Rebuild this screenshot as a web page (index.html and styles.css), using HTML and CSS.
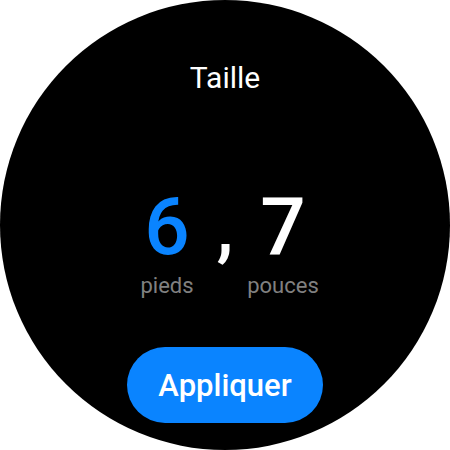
FILE: index.html
```html
<!DOCTYPE html>
<html lang="fr">
<head>
    <meta charset="UTF-8">
    <meta name="viewport" content="width=device-width, initial-scale=1.0">
    <title>Taille</title>
    <link rel="stylesheet" href="styles.css">
</head>
<body>
    <div class="watch">
        <h1 class="title">Taille</h1>

        <div class="picker">
            <div class="col">
                <span class="num active">6</span>
                <span class="unit">pieds</span>
            </div>
            <div class="sep">,</div>
            <div class="col">
                <span class="num">7</span>
                <span class="unit">pouces</span>
            </div>
        </div>

        <button class="apply">Appliquer</button>
    </div>
</body>
</html>
```

FILE: styles.css
```css
body {
    margin: 0;
    padding: 0;
    background-color: #fff;
    font-family: 'Roboto', 'Liberation Sans', sans-serif;
}

.watch {
    width: 450px;
    height: 450px;
    border-radius: 50%;
    background-color: #000;
    display: flex;
    flex-direction: column;
    align-items: center;
    box-sizing: border-box;
    padding-top: 58px;
}

.title {
    margin: 0;
    font-size: 30px;
    font-weight: 400;
    line-height: 40px;
    color: #fff;
}

.picker {
    display: flex;
    align-items: flex-start;
    margin-top: 89px;
}

.col {
    width: 80px;
    display: flex;
    flex-direction: column;
    align-items: center;
}

.num {
    font-size: 80px;
    font-weight: 500;
    line-height: 80px;
    color: #fff;
}

.num.active {
    color: #0a84ff;
}

.sep {
    width: 36px;
    text-align: center;
    font-size: 76px;
    font-weight: 500;
    line-height: 80px;
    color: #fff;
}

.unit {
    margin-top: 8px;
    font-size: 22px;
    line-height: 22px;
    color: #808080;
}

.apply {
    margin-top: 50px;
    width: 196px;
    height: 76px;
    border: none;
    border-radius: 38px;
    background-color: #0a84ff;
    color: #fff;
    font-family: inherit;
    font-size: 31px;
    font-weight: 500;
    cursor: pointer;
}
```
